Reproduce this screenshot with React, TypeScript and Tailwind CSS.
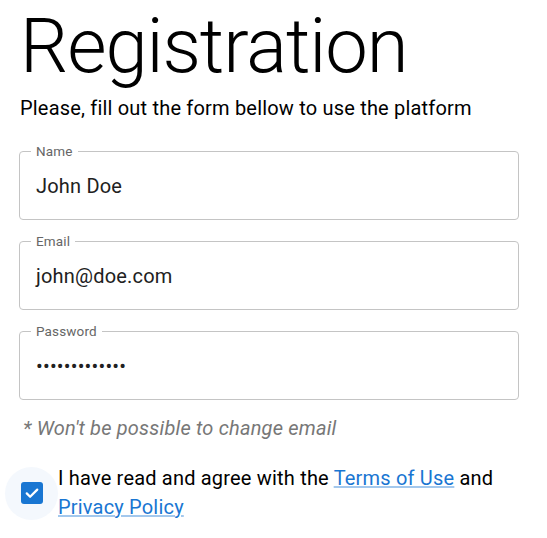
import React from "react";

function Field({ label, value }: { label: string; value: string }) {
  return (
    <fieldset className="border border-[#c4c4c4] rounded-[4px] pl-[11px] pr-[14px] pt-[16px] pb-[21px]">
      <legend className="px-[5px] text-[13.5px] leading-[14px] text-[#666] tracking-[0.15px]">{label}</legend>
      <div className="pl-[5px] text-[20px] leading-[24px] tracking-[0.19px] text-[#212121]">{value}</div>
    </fieldset>
  );
}

export default function App() {
  return (
    <main className="min-h-screen bg-white pl-[19px] pr-[28px] pt-[8px] font-['Roboto',sans-serif]">
      <h1 className="text-[76px] leading-none font-light tracking-[-1.1px] text-black pl-[1px]">Registration</h1>
      <p className="mt-[12px] text-[20px] leading-[24px] tracking-[0.19px] text-black pl-[1px]">
        Please, fill out the form bellow to use the platform
      </p>

      <form className="mt-[24px] flex flex-col gap-[14px]">
        <Field label="Name" value="John Doe" />
        <Field label="Email" value="john@doe.com" />
        <Field label="Password" value="•••••••••••••" />
      </form>

      <p className="mt-[16px] pl-[4px] text-[20px] leading-[24px] italic tracking-[0.19px] text-[#777]">
        * Won't be possible to change email
      </p>

      <div className="mt-[24px] -ml-[14px] flex items-center">
        <div className="w-[53px] h-[53px] shrink-0 rounded-full bg-[#f4f8fd] flex items-center justify-center">
          <div className="w-[22px] h-[22px] rounded-[3px] bg-[#1976d2] flex items-center justify-center">
            <svg viewBox="0 0 24 24" className="w-[18px] h-[18px]" fill="none" stroke="white" strokeWidth="3" strokeLinecap="round" strokeLinejoin="round">
              <path d="M5 12.5l4.5 4.5L19 7.5" />
            </svg>
          </div>
        </div>
        <p className="text-[20px] leading-[29px] tracking-[0.19px] text-black">
          I have read and agree with the{" "}
          <a href="#" className="text-[#1976d2] underline decoration-[#1976d2]/40">Terms of Use</a> and{" "}
          <a href="#" className="text-[#1976d2] underline decoration-[#1976d2]/40">Privacy Policy</a>
        </p>
      </div>
    </main>
  );
}
